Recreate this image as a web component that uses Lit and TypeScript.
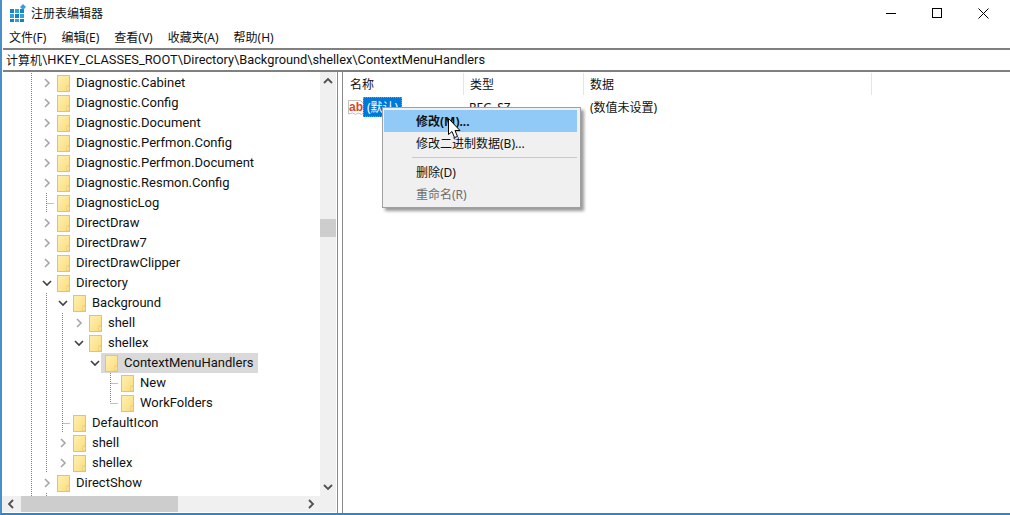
import { LitElement, html, css, svg } from "lit";
import { customElement } from "lit/decorators.js";

type Row = { name: string; depth: number; exp: "" | "c" | "o"; selected?: boolean };

const rows: Row[] = [
  { name: "Diagnostic.Cabinet", depth: 0, exp: "c" },
  { name: "Diagnostic.Config", depth: 0, exp: "c" },
  { name: "Diagnostic.Document", depth: 0, exp: "c" },
  { name: "Diagnostic.Perfmon.Config", depth: 0, exp: "c" },
  { name: "Diagnostic.Perfmon.Document", depth: 0, exp: "c" },
  { name: "Diagnostic.Resmon.Config", depth: 0, exp: "c" },
  { name: "DiagnosticLog", depth: 0, exp: "" },
  { name: "DirectDraw", depth: 0, exp: "c" },
  { name: "DirectDraw7", depth: 0, exp: "c" },
  { name: "DirectDrawClipper", depth: 0, exp: "c" },
  { name: "Directory", depth: 0, exp: "o" },
  { name: "Background", depth: 1, exp: "o" },
  { name: "shell", depth: 2, exp: "c" },
  { name: "shellex", depth: 2, exp: "o" },
  { name: "ContextMenuHandlers", depth: 3, exp: "o", selected: true },
  { name: "New", depth: 4, exp: "" },
  { name: "WorkFolders", depth: 4, exp: "" },
  { name: "DefaultIcon", depth: 1, exp: "" },
  { name: "shell", depth: 1, exp: "c" },
  { name: "shellex", depth: 1, exp: "c" },
  { name: "DirectShow", depth: 0, exp: "c" },
];

const folder = html`<svg class="folder" width="13" height="17" viewBox="0 0 13 17">
  <defs><linearGradient id="fg" x1="0" y1="0" x2="1" y2="1">
    <stop offset="0" stop-color="#fff0b0"/><stop offset="1" stop-color="#fbdc7c"/></linearGradient></defs>
  <rect x="0.5" y="0.5" width="12" height="16" fill="url(#fg)" stroke="#e9c363"/>
  <rect x="10" y="11" width="2" height="5" fill="#fff4c8" stroke="#e9c363" stroke-width="0.8"/>
</svg>`;

const chevC = html`<svg width="10" height="10" viewBox="0 0 10 10"><path d="M3 1l4 4-4 4" fill="none" stroke="#a6a6a6" stroke-width="1.6"/></svg>`;
const chevO = html`<svg width="10" height="10" viewBox="0 0 10 10"><path d="M1 3l4 4 4-4" fill="none" stroke="#404040" stroke-width="1.6"/></svg>`;

const lines: [number, number, number, number][] = [
  [29.5, 0, 29.5, 424],
  [44.5, 0, 44.5, 424],
  [60.5, 210, 60.5, 385],
  [76.5, 230, 76.5, 265],
  [92.5, 270, 92.5, 285],
  [108.5, 290, 108.5, 330],
  [108.5, 310.5, 116, 310.5],
  [108.5, 330.5, 116, 330.5],
  [60.5, 350.5, 68, 350.5],
  [44.5, 130.5, 52, 130.5],
];

@customElement("app-root")
export class AppRoot extends LitElement {
  static styles = css`
    :host { display: flex; flex-direction: column; width: 1010px; height: 515px; box-sizing: border-box;
      background: #fff; position: relative; overflow: hidden; border-left: 2px solid #4a8fc9; border-bottom: 2px solid #2a86d0;
      font-family: "Noto Sans", "Noto Sans CJK SC", sans-serif; font-size: 12px; color: #111; }
    .title { height: 26px; display: flex; align-items: center; padding-left: 8px; flex: none; }
    .title .t { margin-left: 5px; }
    .win { margin-left: auto; display: flex; padding-right: 4px; }
    .win span { width: 46px; height: 26px; display: flex; align-items: center; justify-content: center; }
    .menu { height: 22px; display: flex; align-items: center; padding-left: 7px; gap: 15px; flex: none; }
    .addr { height: 19px; padding: 0 0 1px 3px; border-top: 2px solid #808080; border-bottom: 2px solid #808080; display: flex; align-items: center;
      flex: none; white-space: nowrap; margin-left: 1px; font-family: Roboto, "Noto Sans CJK SC", sans-serif; font-size: 12.8px; }
    .addr .cjk { font-size: 12px; }
    .main { flex: 1; display: flex; min-height: 0; }
    .tree { width: 334px; margin-right: 1px; flex: none; display: flex; flex-direction: column; }
    .tree-top { flex: 1; display: flex; min-height: 0; }
    .rows { flex: 1; position: relative; overflow: hidden; padding-top: 1px; font-family: Roboto, sans-serif; font-size: 13px; }
    .guides { position: absolute; left: 0; top: 1px; }
    .row { height: 20px; display: flex; align-items: center; position: relative; }
    .exp { width: 16px; height: 20px; display: flex; align-items: center; justify-content: center; flex: none; }
    .exp.has { background: #fff; }
    .item { display: flex; align-items: center; height: 20px; padding: 0 4px; margin-left: -2px; }
    .item .folder { margin-right: 6px; flex: none; }
    .item.sel { background: #d9d9d9; }
    .item span { line-height: 20px; white-space: nowrap; background: inherit; }
    .vbar { width: 16px; background: #f0f0f0; display: flex; flex-direction: column; align-items: center; }
    .vbar .spacer1 { height: 129px; }
    .vbar .thumb { width: 16px; height: 18px; background: #cdcdcd; }
    .vbar .arr { height: 18px; display: flex; align-items: center; justify-content: center; }
    .vbar .fill { flex: 1; }
    .hbar { height: 16px; background: #f0f0f0; display: flex; align-items: center; margin-bottom: 1px; }
    .hbar .arr { width: 18px; height: 16px; display: flex; align-items: center; justify-content: center; }
    .hbar .thumb { width: 157px; height: 16px; background: #cdcdcd; margin-left: 1px; }
    .hbar .fill { flex: 1; }
    .hbar .end { width: 16px; }
    .split { width: 6px; flex: none; border-left: 1px solid #8a8a8a; border-right: 1px solid #8a8a8a; box-sizing: border-box; }
    .list { flex: 1; display: flex; flex-direction: column; }
    .hdr { height: 25px; display: flex; flex: none; }
    .hdr div { border-right: 1px solid #e5e5e5; display: flex; align-items: center; padding-left: 6px; box-sizing: border-box; height: 22px; margin-top: 1px; }
    .hdr .c1 { padding-left: 7px; }
    .c1 { width: 121px; } .c2 { width: 120px; } .c3 { width: 288px; }
    .lrow { display: flex; height: 20px; align-items: center; }
    .lcell1 { width: 121px; display: flex; align-items: center; padding-left: 5px; box-sizing: border-box; }
    .lcell2 { width: 120px; padding-left: 5px; box-sizing: border-box; }
    .lcell3 { padding-left: 6px; }
    .selname { background: #0078d7; color: #fff; height: 20px; display: flex; align-items: center; padding: 0 4px; margin-left: -2px; outline: 1px dotted #f08020; outline-offset: -1px; }
    .ctx { position: absolute; left: 380px; top: 107px; width: 199px; height: 101px; box-sizing: border-box; background: #f0f0f0;
      border: 1px solid #a0a0a0; box-shadow: 3px 3px 3px rgba(0,0,0,0.4); padding: 2px 3px 2px 1px; display: flex; flex-direction: column; }
    .ci { height: 22px; box-sizing: border-box; display: flex; align-items: center; padding-left: 32px; flex: none; white-space: nowrap; }
    .ci.hot { background: #91c9f7; font-weight: 700; padding-bottom: 1px; }
    .ci.dis { color: #6d6d6d; }
    .sep { height: 1px; background: #c8c8c8; margin: 3px 0 3px 28px; flex: none; }
    .cursor { position: absolute; left: 446px; top: 118px; }
  `;

  render() {
    return html`
      <div class="title">
        <svg width="16" height="18" viewBox="0 0 16 18">
          <g fill="#1483c4">
            <rect x="0" y="5" width="4" height="4"/><rect x="5" y="5" width="4" height="4" fill="#2ea3dc"/><rect x="10" y="5" width="4" height="4"/>
            <rect x="0" y="10" width="4" height="4" fill="#2ea3dc"/><rect x="5" y="10" width="4" height="4"/><rect x="10" y="10" width="4" height="4" fill="#2ea3dc"/>
            <rect x="0" y="15" width="4" height="3"/><rect x="5" y="15" width="4" height="3" fill="#2ea3dc"/><rect x="10" y="15" width="4" height="3"/>
          </g>
          <path d="M13 0l3 3-3 3-3-3z" fill="#3aa0d8"/>
        </svg>
        <span class="t">注册表编辑器</span>
        <div class="win">
          <span><svg width="10" height="10" viewBox="0 0 10 10"><path d="M0 5.5h10" stroke="#000"/></svg></span>
          <span><svg width="10" height="10" viewBox="0 0 10 10"><rect x="0.5" y="0.5" width="9" height="9" fill="none" stroke="#000"/></svg></span>
          <span><svg width="11" height="11" viewBox="0 0 11 11"><path d="M0.5 0.5l10 10M10.5 0.5l-10 10" stroke="#000" stroke-width="1"/></svg></span>
        </div>
      </div>
      <div class="menu">
        <span>文件(F)</span><span>编辑(E)</span><span>查看(V)</span><span>收藏夹(A)</span><span>帮助(H)</span>
      </div>
      <div class="addr"><span class="cjk">计算机</span>\\HKEY_CLASSES_ROOT\\Directory\\Background\\shellex\\ContextMenuHandlers</div>
      <div class="main">
        <div class="tree">
          <div class="tree-top">
            <div class="rows">
              <svg class="guides" width="318" height="424">
                ${lines.map(([a, b, c, d]) => svg`<line x1=${a} y1=${b} x2=${c} y2=${d} stroke="#808080" stroke-dasharray="1 1"/>`)}
              </svg>
              ${rows.map(
                (r) => html`<div class="row" style="padding-left:${37 + r.depth * 16}px">
                  <div class="exp ${r.exp ? "has" : ""}">${r.exp === "c" ? chevC : r.exp === "o" ? chevO : ""}</div>
                  <div class="item ${r.selected ? "sel" : ""}">${folder}<span>${r.name}</span></div>
                </div>`
              )}
            </div>
            <div class="vbar">
              <div class="arr"><svg width="10" height="8" viewBox="0 0 10 8"><path d="M1 6l4-4 4 4" fill="none" stroke="#505050" stroke-width="1.8"/></svg></div>
              <div class="spacer1"></div>
              <div class="thumb"></div>
              <div class="fill"></div>
              <div class="arr"><svg width="10" height="8" viewBox="0 0 10 8"><path d="M1 2l4 4 4-4" fill="none" stroke="#505050" stroke-width="1.8"/></svg></div>
            </div>
          </div>
          <div class="hbar">
            <div class="arr"><svg width="8" height="10" viewBox="0 0 8 10"><path d="M6 1L2 5l4 4" fill="none" stroke="#505050" stroke-width="1.8"/></svg></div>
            <div class="thumb"></div>
            <div class="fill"></div>
            <div class="arr"><svg width="8" height="10" viewBox="0 0 8 10"><path d="M2 1l4 4-4 4" fill="none" stroke="#505050" stroke-width="1.8"/></svg></div>
            <div class="end"></div>
          </div>
        </div>
        <div class="split"></div>
        <div class="list">
          <div class="hdr"><div class="c1">名称</div><div class="c2">类型</div><div class="c3">数据</div></div>
          <div class="lrow">
            <div class="lcell1">
              <svg width="17" height="18" viewBox="0 0 17 18">
                <path d="M0.5 2.5h12l4 4v8l-3 2-3-1.500-3 1.500-3-1.500-4 1z" fill="#fff" stroke="#c0c0c0"/>
                <text x="1" y="12.500" font-family="Liberation Sans" font-weight="700" font-size="12" fill="#d8452a">ab</text>
              </svg>
              <div class="selname">(默认)</div>
            </div>
            <div class="lcell2">REG_SZ</div>
            <div class="lcell3">(数值未设置)</div>
          </div>
        </div>
      </div>
      <div class="ctx">
        <div class="ci hot">修改(M)...</div>
        <div class="ci">修改二进制数据(B)...</div>
        <div class="sep"></div>
        <div class="ci">删除(D)</div>
        <div class="ci dis">重命名(R)</div>
      </div>
      <svg class="cursor" width="14" height="21" viewBox="0 0 14 21">
        <path d="M0.500 0.500V16.500L4 13.500L6.500 19.500L9.500 18.500L7 12.500H12z" fill="#fff" stroke="#000"/>
      </svg>
    `;
  }
}
